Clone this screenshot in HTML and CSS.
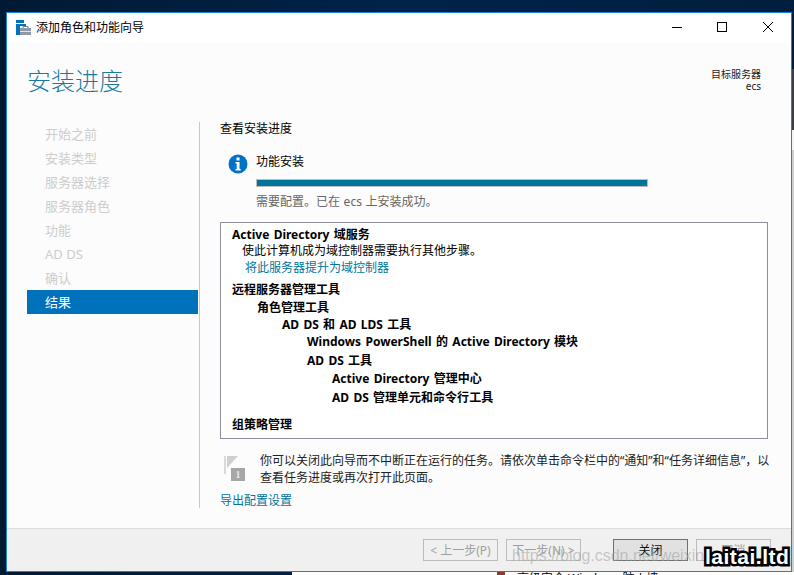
FILE: index.html
```html
<!DOCTYPE html>
<html lang="zh-CN">
<head>
<meta charset="utf-8">
<title>添加角色和功能向导</title>
<link rel="stylesheet" href="styles.css">
</head>
<body>
<div class="desktop">
  <div class="behind-side"></div>
  <div class="behind-app"><i class="behind-icon"></i><span class="behind-text">高级安全 Windows 防火墙</span></div>
  <div class="window">
    <header class="titlebar">
      <svg class="app-icon" width="16" height="16" viewBox="0 0 16 16">
        <rect x="0" y="0" width="8" height="3" fill="#0072bc"/>
        <rect x="0" y="4" width="4" height="11" fill="#0072bc"/>
        <rect x="4" y="4" width="6" height="2" fill="#0072bc"/>
        <path d="M4 8h11v7H4z" fill="#8d99a6"/>
        <path d="M7 8V6.500h5V8" fill="none" stroke="#6f7c89"/>
        <rect x="4" y="11" width="11" height="1" fill="#dfe4e8"/>
      </svg>
      <span class="title">添加角色和功能向导</span>
      <div class="controls">
        <svg width="12" height="12" viewBox="0 0 12 12"><path d="M2 5.500h10" stroke="#000" fill="none"/></svg>
        <svg width="12" height="12" viewBox="0 0 12 12"><rect x="1.500" y="0.500" width="9" height="9" stroke="#000" fill="none"/></svg>
        <svg width="12" height="12" viewBox="0 0 12 12"><path d="M1 0l10 10M11 0L1 10" stroke="#000" fill="none"/></svg>
      </div>
    </header>
    <div class="head">
      <h1 class="page-title">安装进度</h1>
      <div class="target"><div>目标服务器</div><div>ecs</div></div>
    </div>
    <div class="body">
      <nav class="steps">
        <div class="step">开始之前</div>
        <div class="step">安装类型</div>
        <div class="step">服务器选择</div>
        <div class="step">服务器角色</div>
        <div class="step">功能</div>
        <div class="step">AD DS</div>
        <div class="step">确认</div>
        <div class="step current">结果</div>
      </nav>
      <main class="content">
        <div class="lead">查看安装进度</div>
        <div class="status">
          <svg class="info" width="20" height="20" viewBox="0 0 20 20">
            <circle cx="10" cy="10" r="9.500" fill="#0072c6"/>
            <rect x="8.500" y="3.500" width="3" height="3" fill="#fff"/>
            <path d="M7.500 8h4v7h1.200v1.500H7.500V15h1.200V9.500H7.500z" fill="#fff"/>
          </svg>
          <div class="status-main">
            <div class="status-name">功能安装</div>
            <div class="bar"><div class="bar-fill"></div></div>
            <div class="status-note">需要配置。已在 ecs 上安装成功。</div>
          </div>
        </div>
        <section class="results">
          <div class="row b">Active Directory 域服务</div>
          <div class="row tighter indent-s">使此计算机成为域控制器需要执行其他步骤。</div>
          <div class="row tight"><a class="link indent-l">将此服务器提升为域控制器</a></div>
          <div class="row b gap-m">远程服务器管理工具</div>
          <div class="row b l1">角色管理工具</div>
          <div class="row b l2 tight">AD DS 和 AD LDS 工具</div>
          <div class="row b l3 tight">Windows PowerShell 的 Active Directory 模块</div>
          <div class="row b l3 gap-s">AD DS 工具</div>
          <div class="row b l4">Active Directory 管理中心</div>
          <div class="row b l4 gap-s">AD DS 管理单元和命令行工具</div>
          <div class="row b gap-l">组策略管理</div>
        </section>
        <div class="notice">
          <svg class="flag" width="22" height="25" viewBox="0 0 22 25">
            <rect x="0" y="0" width="2" height="18" fill="#d9d9d9"/>
            <path d="M3 0h11L3 12z" fill="#cfcfcf"/>
            <rect x="7" y="12" width="14" height="13" fill="#a6a6a6"/>
            <text x="14" y="22" class="flag-num">1</text>
          </svg>
          <p class="notice-text">你可以关闭此向导而不中断正在运行的任务。请依次单击命令栏中的“通知”和“任务详细信息”，以<br>查看任务进度或再次打开此页面。</p>
        </div>
        <a class="link export">导出配置设置</a>
      </main>
    </div>
    <footer class="footer">
      <button class="btn off">&lt; 上一步(P)</button>
      <button class="btn off next">下一步(N) &gt;</button>
      <button class="btn primary">关闭</button>
      <button class="btn off">取消</button>
    </footer>
    <div class="wm-url">https://blog.csdn.net/weixin</div>
    <div class="wm-brand">laitai.ltd</div>
  </div>
</div>
</body>
</html>
```
FILE: styles.css
```css
* { box-sizing: border-box; }
html, body { margin: 0; height: 100%; overflow: hidden; }
body { font-family: "Noto Sans", "Noto Sans CJK SC", sans-serif; font-size: 12px; color: #000; }
.desktop { position: relative; overflow: hidden; width: 794px; height: 575px; padding: 12px 2px 3px 6px; background: linear-gradient(90deg, #001a33 0, #00234a 50%, #001f3f 100%); }
.behind-side { position: absolute; left: 792px; top: 69px; width: 2px; height: 506px; background: linear-gradient(180deg, #3a3f45 0, #3a3f45 61px, #f4f4f4 61px, #f4f4f4 81px, #cfcfcf 81px); }
.behind-app { position: absolute; left: 292px; top: 572px; width: 502px; height: 3px; overflow: hidden; background: #fff; }
.behind-icon { position: absolute; left: 205px; top: 0; width: 8px; height: 3px; background: #8a3a2c; }
.behind-text { position: absolute; left: 225px; top: -1px; font-size: 12px; line-height: 16px; white-space: nowrap; }
.window { position: relative; width: 786px; height: 560px; display: flex; flex-direction: column; border: 1px solid #1883d7; background: #fcfcfc; }
.titlebar { height: 30px; flex: none; display: flex; align-items: center; background: #fff; padding-left: 9px; }
.app-icon { flex: none; }
.title { margin-left: 4px; line-height: 16px; }
.controls { margin-left: auto; display: flex; gap: 34px; padding: 0 17px 0 0; }
.head { height: 79px; flex: none; display: flex; justify-content: space-between; padding: 21px 30px 0 20px; }
.page-title { margin: 0; font-size: 24px; font-weight: 300; line-height: 34px; color: #1a7a9c; }
.target { text-align: right; font-size: 10px; line-height: 12px; padding-top: 4px; color: #1a1a1a; }
.body { flex: 1; display: flex; min-height: 0; }
.steps { width: 171px; margin-left: 20px; flex: none; }
.step { height: 24px; line-height: 24px; padding-left: 18px; font-size: 13px; color: #cdcdcd; }
.step.current { background: #0072bc; color: #fff; }
.content { width: 570px; height: 386px; flex: none; margin-left: 1px; border-left: 1px solid #c8c8c8; padding-left: 20px; }
.lead { line-height: 16px; margin-top: -1px; }
.status { display: flex; margin-top: 16px; padding-left: 8px; }
.info { flex: none; margin-top: 1px; }
.status-main { margin-left: 8px; }
.status-name { line-height: 18px; }
.bar { width: 392px; height: 8px; margin-top: 8px; border: 1px solid #bcbcbc; }
.bar-fill { height: 100%; background: #00759a; }
.status-note { margin-top: 7px; line-height: 16px; color: #666; word-spacing: 0.5px; }
.results { width: 548px; height: 217px; margin-top: 12px; padding: 3px 11px 0; border: 1px solid #8e8f9b; background: #fff; }
.row { line-height: 18px; height: 18px; white-space: nowrap; }
.row.tight { margin-top: -1px; }
.row.tighter { margin-top: -2px; }
.b { font-weight: 700; word-spacing: 1.2px; }
.indent-s { padding-left: 10px; }
.indent-l { padding-left: 13px; }
.gap-s { margin-top: 1px; }
.gap-m { margin-top: 4px; }
.gap-l { margin-top: 9px; }
.l1 { padding-left: 25px; }
.l2 { padding-left: 50px; }
.l3 { padding-left: 75px; }
.l4 { padding-left: 100px; }
.link { color: #00749e; }
.notice { display: flex; margin-top: 13px; padding-left: 4px; }
.flag { flex: none; margin-top: 4px; }
.flag-num { font-size: 10px; font-weight: 700; fill: #e8e8e8; text-anchor: middle; font-family: "Liberation Serif", serif; }
.notice-text { flex: none; margin: 0 0 0 14px; line-height: 17px; white-space: nowrap; color: #222; }
.export { display: block; margin-top: 7px; line-height: 16px; }
.footer { height: 43px; flex: none; margin-top: 20px; display: flex; padding: 10px 0 0 416px; background: #f0f0f0; border-top: 1px solid #dcdcdc; }
.btn { width: 75px; height: 22px; padding: 0; font: inherit; background: #f0f0f0; border: 1px solid #bcbcbc; color: #a0a0a0; margin-right: 8px; }
.btn.next { margin-right: 32px; }
.btn.primary { border-color: #707070; background: #e1e1e1; color: #111; }
.wm-url { position: absolute; left: 505px; top: 533px; font-family: "Liberation Sans", sans-serif; font-size: 16px; line-height: 20px; color: rgba(160, 160, 160, 0.55); white-space: nowrap; }
.wm-brand { position: absolute; left: 698px; top: 531px; font-family: "Liberation Sans", sans-serif; font-size: 21px; font-weight: 700; line-height: 26px; color: #fff; letter-spacing: 0.5px; -webkit-text-stroke: 5px #000; paint-order: stroke fill; white-space: nowrap; }
```
